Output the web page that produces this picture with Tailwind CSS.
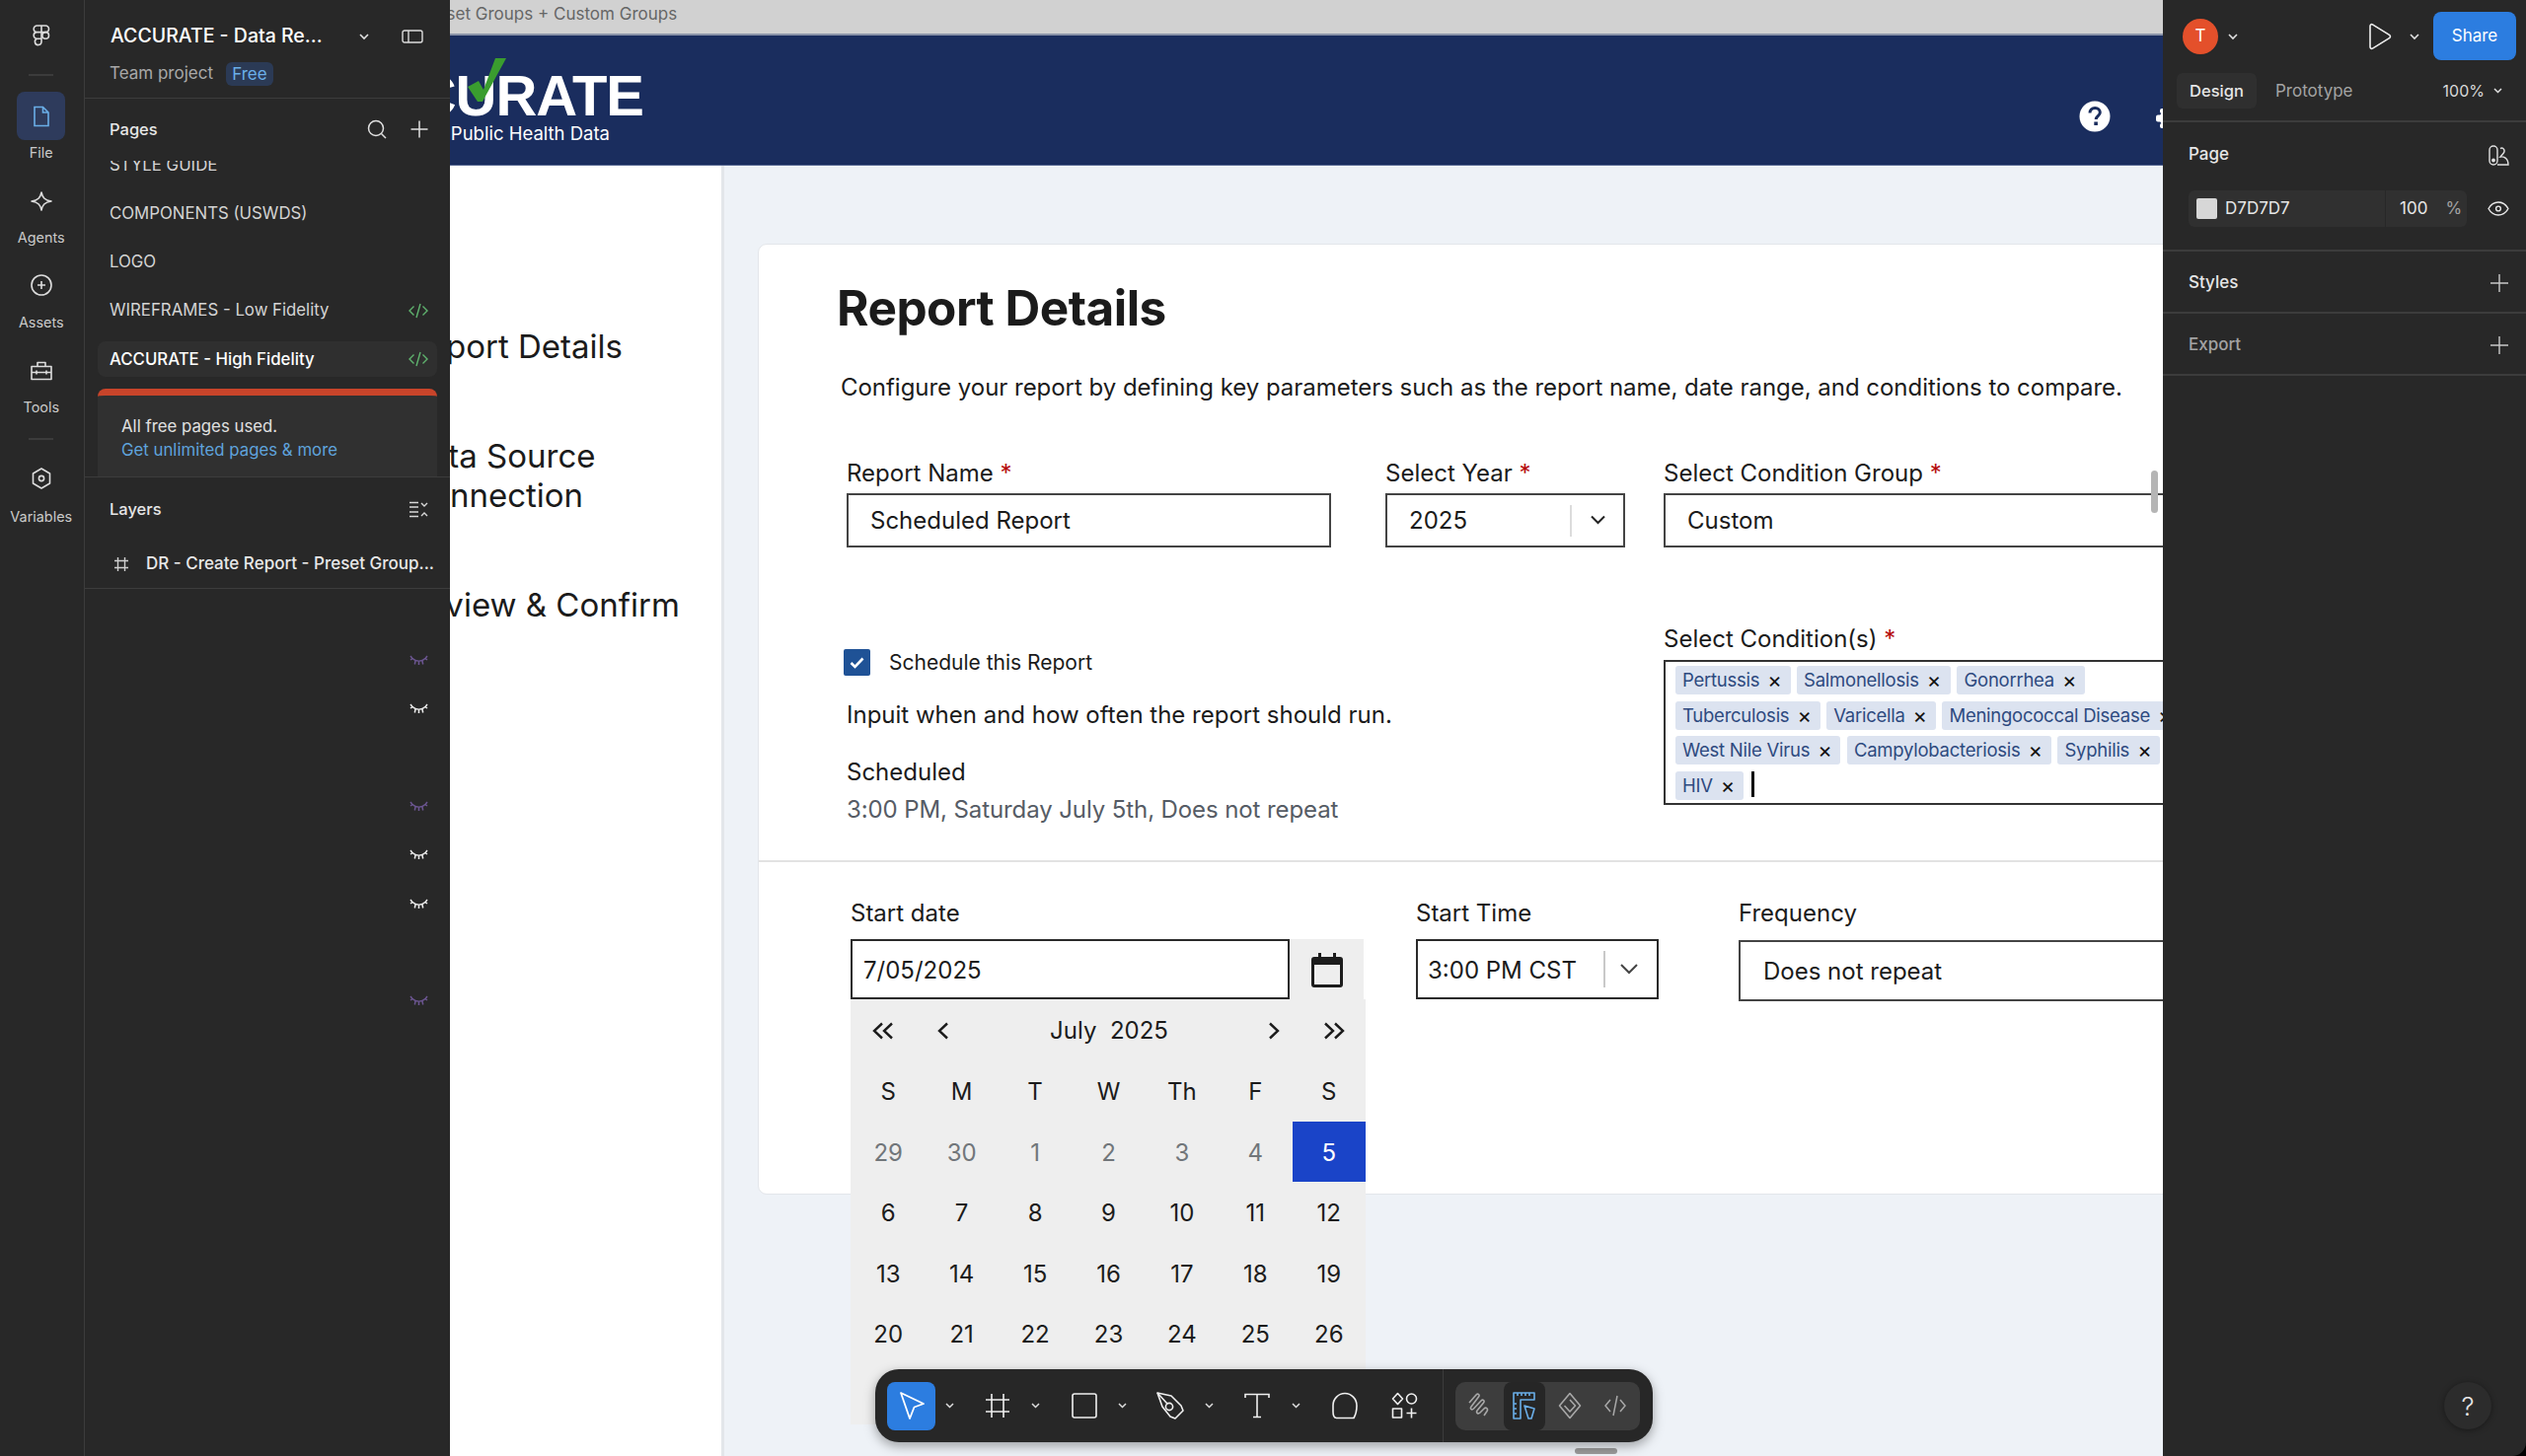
<!DOCTYPE html>
<html lang="en">
<head>
    <meta charset="UTF-8">
    <title>ACCURATE - Data Reports</title>
    <script src="https://cdn.jsdelivr.net/npm/@tailwindcss/browser@4"></script>
</head>
<body class="bg-black font-['Inter','Noto_Sans',sans-serif]">
<div class="flex w-[2560px] h-[1476px] overflow-hidden rounded-br-[14px]">

    <!-- left rail -->
    <nav class="w-[86px] shrink-0 bg-[#282828] border-r border-[#3c3c3c] pr-[1.500px] flex flex-col items-center text-[14.400px] text-[#c9c9c9]">
        <svg class="mt-[25px]" width="20" height="22" viewBox="0 0 20 22" fill="none" stroke="#dcdcdc" stroke-width="1.6"><path d="M10 1H5.500a3.300 3.300 0 0 0 0 6.600H10zM10 1h4.200a3.300 3.300 0 0 1 0 6.600H10zM10 7.600H5.500a3.300 3.300 0 0 0 0 6.600H10zM10 14.200H5.500A3.300 3.300 0 1 0 10 17.500z"/><circle cx="14.200" cy="10.900" r="3.300"/></svg>
        <div class="w-[25px] h-[2px] bg-[#3c3c3c] mt-[28px]"></div>
        <div class="w-[49px] h-[49px] rounded-[8px] bg-[#2e3b5c] mt-[16px] flex items-center justify-center">
            <svg width="18" height="22" viewBox="0 0 18 22" fill="none" stroke="#6aaee8" stroke-width="1.6"><path d="M2 1.500h8.500L16 7v13.500H2zM10.500 1.500V7H16"/></svg>
        </div>
        <span class="mt-[4px] leading-[18px]">File</span>
        <svg class="mt-[29px]" width="24" height="22" viewBox="0 0 24 22" fill="none" stroke="#dcdcdc" stroke-width="1.6"><path d="M12 2c1 5 3 8 10 9-7 1-9 4-10 9-1-5-3-8-10-9 7-1 9-4 10-9z" stroke-linejoin="round"/></svg>
        <span class="mt-[17px] leading-[18px]">Agents</span>
        <svg class="mt-[27px]" width="24" height="24" viewBox="0 0 24 24" fill="none" stroke="#dcdcdc" stroke-width="1.6"><circle cx="12" cy="12" r="10"/><path d="M12 8v8M8 12h8"/></svg>
        <span class="mt-[17px] leading-[18px]">Assets</span>
        <svg class="mt-[29px]" width="24" height="22" viewBox="0 0 24 22" fill="none" stroke="#dcdcdc" stroke-width="1.6"><path d="M8 6V2.500h8V6M2 6.500h20v13H2zM2 12.500h20M7 10.500v4M17 10.500v4" stroke-linejoin="round"/></svg>
        <span class="mt-[17px] leading-[18px]">Tools</span>
        <div class="w-[25px] h-[2px] bg-[#3c3c3c] mt-[22px]"></div>
        <svg class="mt-[27px]" width="22" height="24" viewBox="0 0 22 24" fill="none" stroke="#dcdcdc" stroke-width="1.6"><path d="M11 2l8.500 5v10L11 22l-8.500-5V7z" stroke-linejoin="round"/><circle cx="11" cy="12" r="2.600"/></svg>
        <span class="mt-[18px] leading-[18px]">Variables</span>
    </nav>

    <!-- pages and layers -->
    <aside class="w-[370px] shrink-0 bg-[#282828] flex flex-col text-[#d4d4d4]">
        <header class="h-[100px] shrink-0 border-b border-[#3c3c3c] pl-[26px] pt-[25px]">
            <div class="flex items-center h-[24px]">
                <span class="text-[19.500px] font-medium text-white whitespace-nowrap w-[251px]">ACCURATE - Data Re...</span>
                <svg class="ml-[1px]" width="10" height="7" viewBox="0 0 10 7" fill="none" stroke="#e0e0e0" stroke-width="1.6"><path d="M1 1l4 4 4-4"/></svg>
                <svg class="ml-[33px]" width="22" height="14" viewBox="0 0 22 14" fill="none" stroke="#dcdcdc" stroke-width="1.4"><rect x="1" y="1" width="20" height="12" rx="2"/><path d="M7 1v12"/></svg>
            </div>
            <div class="flex items-center mt-[13px] text-[17px]">
                <span class="text-[#a8a8a8] ml-[-1px]">Team project</span>
                <span class="ml-[13px] w-[48px] h-[24px] text-center leading-[24px] rounded-[6px] bg-[#2b3a55] text-[#6aaee8]">Free</span>
            </div>
        </header>
        <div class="h-[63px] shrink-0 flex items-center pl-[25px] pr-[21px] pb-[1px] text-[16.500px] font-medium text-[#e6e6e6] relative z-10 bg-[#282828]">
            <span class="flex-1">Pages</span>
            <svg width="20" height="20" viewBox="0 0 20 20" fill="none" stroke="#e0e0e0" stroke-width="1.5"><circle cx="9" cy="9" r="7.500"/><path d="M14.500 14.500L19 19"/></svg>
            <svg class="ml-[23px]" width="20" height="20" viewBox="0 0 20 20" fill="none" stroke="#e0e0e0" stroke-width="1.5"><path d="M10 1.500v17M1.500 10h17"/></svg>
        </div>
        <div class="h-[321px] shrink-0 overflow-hidden border-b border-[#3c3c3c] text-[16.800px]">
            <div class="mt-[-20.500px]">
                <div class="h-[49.300px] flex items-center pl-[25px]">STYLE GUIDE</div>
                <div class="h-[49.300px] flex items-center pl-[25px]">COMPONENTS (USWDS)</div>
                <div class="h-[49.300px] flex items-center pl-[25px]">LOGO</div>
                <div class="h-[49.300px] flex items-center pl-[25px] pr-[22px] justify-between">
                    <span>WIREFRAMES - Low Fidelity</span>
                    <svg width="20" height="16" viewBox="0 0 20 16" fill="none" stroke="#5fb36e" stroke-width="1.4"><path d="M5.500 3.500L1 8l4.500 4.500M14.500 3.500L19 8l-4.500 4.500M12 1L8 15"/></svg>
                </div>
                <div class="h-[49.300px] flex items-center mx-[13px] pl-[12px] pr-[9px] justify-between font-medium text-white relative">
                    <span class="absolute inset-x-0 top-[6.600px] h-[36px] rounded-[8px] bg-[#2f2f2f]"></span>
                    <span class="relative">ACCURATE - High Fidelity</span>
                    <svg class="relative" width="20" height="16" viewBox="0 0 20 16" fill="none" stroke="#5fb36e" stroke-width="1.4"><path d="M5.500 3.500L1 8l4.500 4.500M14.500 3.500L19 8l-4.500 4.500M12 1L8 15"/></svg>
                </div>
                <div class="mx-[13px] mt-[5.500px] rounded-t-[8px] border-t-[7px] border-[#c8442a] bg-[#303030] pl-[24px] pt-[19px] pb-[40px] text-[16.800px] leading-[24px]">
                    <p class="text-[#e0e0e0]">All free pages used.</p>
                    <p class="text-[#5fa3dc]">Get unlimited pages &amp; more</p>
                </div>
            </div>
        </div>
        <div class="h-[113px] shrink-0 border-b border-[#3c3c3c]">
            <div class="flex items-center justify-between h-[64px] pl-[25px] pr-[22px] text-[16.500px] font-medium text-[#e6e6e6]">
                <span>Layers</span>
                <svg width="20" height="17" viewBox="0 0 20 17" fill="none" stroke="#d8d8d8" stroke-width="1.4"><path d="M1 1.500h9M1 6h9M1 11h9M1 15.500h9M13 2l3 3 3-3M13 15l3-3 3 3"/></svg>
            </div>
            <div class="flex items-center h-[48px] pl-[29px] text-[17px] font-medium text-[#e8e8e8] whitespace-nowrap">
                <svg width="16" height="16" viewBox="0 0 16 16" fill="none" stroke="#cfcfcf" stroke-width="1.4"><path d="M4.500 1v14M11.500 1v14M1 4.500h14M1 11.500h14"/></svg>
                <span class="ml-[17px]">DR - Create Report - Preset Group...</span>
            </div>
        </div>
        <ul class="mt-[48px] pr-[22px] flex flex-col items-end">
            <li class="h-[49.300px] flex items-center text-[#6b5590]"><svg width="19" height="11" viewBox="0 0 19 11" fill="none" stroke="currentColor" stroke-width="1.500"><path d="M3 3.500c2 2 4 2.700 6.500 2.700S14 5.500 16 3.500M1 1l2 2.500L1 5M18 1l-2 2.500L18 5M6 6l-.7 3.500M13 6l.7 3.500M9.500 6.500V10"/></svg></li>
            <li class="h-[49.300px] flex items-center text-[#ececec]"><svg width="19" height="11" viewBox="0 0 19 11" fill="none" stroke="currentColor" stroke-width="1.500"><path d="M3 3.500c2 2 4 2.700 6.500 2.700S14 5.500 16 3.500M1 1l2 2.500L1 5M18 1l-2 2.500L18 5M6 6l-.7 3.500M13 6l.7 3.500M9.500 6.500V10"/></svg></li>
            <li class="h-[49.300px]"></li>
            <li class="h-[49.300px] flex items-center text-[#6b5590]"><svg width="19" height="11" viewBox="0 0 19 11" fill="none" stroke="currentColor" stroke-width="1.500"><path d="M3 3.500c2 2 4 2.700 6.500 2.700S14 5.500 16 3.500M1 1l2 2.500L1 5M18 1l-2 2.500L18 5M6 6l-.7 3.500M13 6l.7 3.500M9.500 6.500V10"/></svg></li>
            <li class="h-[49.300px] flex items-center text-[#ececec]"><svg width="19" height="11" viewBox="0 0 19 11" fill="none" stroke="currentColor" stroke-width="1.500"><path d="M3 3.500c2 2 4 2.700 6.500 2.700S14 5.500 16 3.500M1 1l2 2.500L1 5M18 1l-2 2.500L18 5M6 6l-.7 3.500M13 6l.7 3.500M9.500 6.500V10"/></svg></li>
            <li class="h-[49.300px] flex items-center text-[#ececec]"><svg width="19" height="11" viewBox="0 0 19 11" fill="none" stroke="currentColor" stroke-width="1.500"><path d="M3 3.500c2 2 4 2.700 6.500 2.700S14 5.500 16 3.500M1 1l2 2.500L1 5M18 1l-2 2.500L18 5M6 6l-.7 3.500M13 6l.7 3.500M9.500 6.500V10"/></svg></li>
            <li class="h-[49.300px]"></li>
            <li class="h-[49.300px] flex items-center text-[#6b5590]"><svg width="19" height="11" viewBox="0 0 19 11" fill="none" stroke="currentColor" stroke-width="1.500"><path d="M3 3.500c2 2 4 2.700 6.500 2.700S14 5.500 16 3.500M1 1l2 2.500L1 5M18 1l-2 2.500L18 5M6 6l-.7 3.500M13 6l.7 3.500M9.500 6.500V10"/></svg></li>
        </ul>
    </aside>

    <!-- canvas: the frame is scrolled 200px past the left edge -->
    <main class="w-[1736px] shrink-0 relative overflow-hidden bg-[#eef2f7]">
        <div class="w-[2100px] ml-[-200px] flex flex-col h-full text-[#1b1b1b] text-[24px]">
            <div class="h-[36px] shrink-0 bg-[#d1d1d1] border-b-2 border-[#8a93a8] text-[17px] leading-[28px] text-[#666] whitespace-nowrap">DR - Create Report - Preset Groups + Custom Groups</div>

            <div class="h-[132px] shrink-0 bg-[#1a2d5e] border-b border-[#5a6a94] flex items-start text-white">
                <div class="relative w-[396px] flex flex-col items-end">
                    <span class="mt-[31px] text-[58px] leading-[60px] font-bold tracking-[-1px] font-['Liberation_Sans',sans-serif]">ACCURATE</span>
                    <span class="pr-[34px] mt-[-4px] text-[18.500px] leading-[24px]">Public Health Data</span>
                    <svg class="absolute left-[216px] top-[22px]" width="44" height="46" viewBox="0 0 44 46"><path d="M2 30l11-6 5 9L30 1h11L17 45h-5z" fill="#3a9d2f"/></svg>
                </div>
                <svg class="ml-[1455px] mt-[66px]" width="32" height="32" viewBox="0 0 32 32"><circle cx="16" cy="16" r="15.500" fill="#fff"/><path d="M11 12.500c0-3 2.300-5 5.200-5 3 0 5.100 1.900 5.100 4.500 0 3.600-4.100 3.700-4.100 7" fill="none" stroke="#1a2d5e" stroke-width="3"/><rect x="15.300" y="21.500" width="3.600" height="3.500" fill="#1a2d5e"/></svg>
                <svg class="ml-[46px] mt-[74px]" width="24" height="20" viewBox="0 0 24 20"><circle cx="12" cy="10" r="8.500" fill="#fff"/><rect x="0" y="6.500" width="6" height="7" rx="2" fill="#fff"/><rect x="4" y="0" width="6" height="5" rx="2" fill="#fff"/><rect x="4" y="15" width="6" height="5" rx="2" fill="#fff"/></svg>
            </div>

            <div class="flex-1 flex min-h-0">
                <!-- step list -->
                <div class="w-[478px] shrink-0 bg-white border-r-[3px] border-[#e3e6ea] pl-[156px] text-[33px] leading-[40px] text-[#1b1b1b]">
                    <p class="mt-[163px] whitespace-nowrap">Report Details</p>
                    <p class="mt-[71px] whitespace-nowrap">Data Source<br>Connection</p>
                    <p class="mt-[71px] whitespace-nowrap">Review &amp; Confirm</p>
                </div>

                <!-- form card -->
                <section class="ml-[34px] mt-[79px] w-[1600px] h-[964px] bg-white border border-[#e3e6ea] rounded-l-[9px]">
                    <div class="h-[626px] border-b-2 border-[#e2e2e2] pl-[89px] pt-[34px]">
                        <h1 class="ml-[-10px] text-[49.500px] leading-[60px] font-bold tracking-[-0.5px] text-[#1b1b1b]">Report Details</h1>
                        <p class="mt-[34px] ml-[-6px] leading-[34px] tracking-[-0.03px] whitespace-nowrap">Configure your report by defining key parameters such as the report name, date range, and conditions to compare.</p>
                        <div class="mt-[54px] flex">
                            <div class="w-[491px]">
                                <label class="block leading-[32px]">Report Name <span class="text-[#b50909]">*</span></label>
                                <div class="mt-[4px] h-[55px] border-2 border-[#444] pl-[22px] leading-[52px]">Scheduled Report</div>
                            </div>
                            <div class="w-[243px] ml-[55px]">
                                <label class="block leading-[32px]">Select Year <span class="text-[#b50909]">*</span></label>
                                <div class="mt-[4px] h-[55px] border-2 border-[#444] pl-[22px] pt-[1px] flex items-center relative">
                                    <span>2025</span>
                                    <span class="absolute left-[185px] top-[10px] h-[32px] w-[2px] bg-[#dcdcdc]"></span>
                                    <svg class="absolute left-[206px] top-[20px]" width="15" height="10" viewBox="0 0 15 10" fill="none" stroke="#222" stroke-width="2"><path d="M1 1.500l6.500 6.500L14 1.500"/></svg>
                                </div>
                            </div>
                            <div class="w-[600px] ml-[39px]">
                                <label class="block leading-[32px]">Select Condition Group <span class="text-[#b50909]">*</span></label>
                                <div class="mt-[4px] h-[55px] border-2 border-[#444] pl-[22px] leading-[52px]">Custom</div>
                            </div>
                        </div>
                        <div class="mt-[77px] flex">
                            <div class="w-[828px] pt-[26px]">
                                <div class="flex items-center ml-[-3px]">
                                    <span class="w-[27px] h-[27px] rounded-[2px] bg-[#1f5296] flex items-center justify-center">
                                        <svg width="15" height="12" viewBox="0 0 15 12" fill="none" stroke="#fff" stroke-width="2.600"><path d="M1.500 6l4 4 8-8.500"/></svg>
                                    </span>
                                    <span class="ml-[19px] text-[21px] leading-[27px]">Schedule this Report</span>
                                </div>
                                <p class="mt-[23px] leading-[34px]">Inpuit when and how often the report should run.</p>
                                <p class="mt-[24px] leading-[34px]">Scheduled</p>
                                <p class="mt-[4px] leading-[34px] tracking-[-0.1px] text-[#565c65]">3:00 PM, Saturday July 5th, Does not repeat</p>
                            </div>
                            <div>
                                <label class="block leading-[30px] relative top-[1px]">Select Condition(s) <span class="text-[#b50909]">*</span></label>
                                <div class="mt-[7px] w-[566px] h-[147px] border-2 border-[#333] pl-[10px] pr-[14px] pt-[4px] flex flex-wrap content-start gap-x-[6.500px] gap-y-[6.500px] text-[18.500px] leading-[29px] tracking-[-0.25px] text-[#2e4a7f]">
                                    <span class="h-[29px] pl-[7px] pr-[9px] rounded-[3px] bg-[#dce3f0] flex items-center whitespace-nowrap">Pertussis<span class="ml-[8px] text-[#111] text-[22px]">×</span></span>
                                    <span class="h-[29px] pl-[7px] pr-[10px] rounded-[3px] bg-[#dce3f0] flex items-center whitespace-nowrap">Salmonellosis<span class="ml-[8px] text-[#111] text-[22px]">×</span></span>
                                    <span class="h-[29px] pl-[7px] pr-[9px] rounded-[3px] bg-[#dce3f0] flex items-center whitespace-nowrap">Gonorrhea<span class="ml-[8px] text-[#111] text-[22px]">×</span></span>
                                    <span class="h-[29px] pl-[7px] pr-[9px] rounded-[3px] bg-[#dce3f0] flex items-center whitespace-nowrap">Tuberculosis<span class="ml-[8px] text-[#111] text-[22px]">×</span></span>
                                    <span class="h-[29px] pl-[7px] pr-[9px] rounded-[3px] bg-[#dce3f0] flex items-center whitespace-nowrap">Varicella<span class="ml-[8px] text-[#111] text-[22px]">×</span></span>
                                    <span class="h-[29px] pl-[7px] pr-[9px] rounded-[3px] bg-[#dce3f0] flex items-center whitespace-nowrap">Meningococcal Disease<span class="ml-[8px] text-[#111] text-[22px]">×</span></span>
                                    <span class="h-[29px] pl-[7px] pr-[9px] rounded-[3px] bg-[#dce3f0] flex items-center whitespace-nowrap">West Nile Virus<span class="ml-[8px] text-[#111] text-[22px]">×</span></span>
                                    <span class="h-[29px] pl-[7px] pr-[9px] rounded-[3px] bg-[#dce3f0] flex items-center whitespace-nowrap">Campylobacteriosis<span class="ml-[8px] text-[#111] text-[22px]">×</span></span>
                                    <span class="h-[29px] pl-[7px] pr-[9px] rounded-[3px] bg-[#dce3f0] flex items-center whitespace-nowrap">Syphilis<span class="ml-[8px] text-[#111] text-[22px]">×</span></span>
                                    <span class="h-[29px] pl-[7px] pr-[9px] rounded-[3px] bg-[#dce3f0] flex items-center whitespace-nowrap">HIV<span class="ml-[8px] text-[#111] text-[22px]">×</span></span>
                                    <span class="w-[3px] h-[26px] bg-black ml-[1px]"></span>
                                </div>
                            </div>
                        </div>
                    </div>

                    <div class="pt-[36px] pl-[93px] flex">
                        <div class="w-[573px] relative">
                            <label class="block leading-[32px]">Start date</label>
                            <div class="mt-[10px] flex h-[61px]">
                                <div class="w-[445px] border-2 border-[#2a2a2a] pl-[11px] leading-[59px]">7/05/2025</div>
                                <div class="w-[75px] bg-[#eeeeee] flex items-center justify-center">
                                    <svg width="32" height="36" viewBox="0 0 32 36"><path d="M7 1h3v4h12V1h3v4h4a3 3 0 0 1 3 3v25a3 3 0 0 1-3 3H3a3 3 0 0 1-3-3V8a3 3 0 0 1 3-3h4zM3 13v20h26V13z" fill="#1c1c1c"/></svg>
                                </div>
                            </div>
                            <!-- date picker drops over the card -->
                            <div class="absolute left-0 top-[103px] z-10 w-[522px] h-[431px] bg-[#eeeeee] text-center">
                                <div class="h-[62px] pt-[2px] flex items-center text-[#1b1b1b]">
                                    <svg class="ml-[21px]" width="24" height="18" viewBox="0 0 24 18" fill="none" stroke="#1b1b1b" stroke-width="2.400"><path d="M11 1.500L3 9l8 7.500M21 1.500L13 9l8 7.500"/></svg>
                                    <svg class="ml-[43px]" width="12" height="18" viewBox="0 0 12 18" fill="none" stroke="#1b1b1b" stroke-width="2.400"><path d="M10 1.500L2 9l8 7.500"/></svg>
                                    <span class="ml-[92px] w-[140px] whitespace-pre text-[24px]">July  2025</span>
                                    <svg class="ml-[91px]" width="12" height="18" viewBox="0 0 12 18" fill="none" stroke="#1b1b1b" stroke-width="2.400"><path d="M2 1.500L10 9l-8 7.500"/></svg>
                                    <svg class="ml-[43px]" width="24" height="18" viewBox="0 0 24 18" fill="none" stroke="#1b1b1b" stroke-width="2.400"><path d="M3 1.500L11 9l-8 7.500M13 1.500L21 9l-8 7.500"/></svg>
                                </div>
                                <div class="grid grid-cols-7 auto-rows-[61.500px] items-stretch pl-[1px]">
                                    <span class="leading-[63px]">S</span><span class="leading-[63px]">M</span><span class="leading-[63px]">T</span><span class="leading-[63px]">W</span><span class="leading-[63px]">Th</span><span class="leading-[63px]">F</span><span class="leading-[63px]">S</span>
                                    <span class="leading-[63px] text-[#71767a]">29</span><span class="leading-[63px] text-[#71767a]">30</span><span class="leading-[63px] text-[#71767a]">1</span><span class="leading-[63px] text-[#71767a]">2</span><span class="leading-[63px] text-[#71767a]">3</span><span class="leading-[63px] text-[#71767a]">4</span><span class="leading-[63px] bg-[#1a44c8] text-white">5</span>
                                    <span class="leading-[63px]">6</span><span class="leading-[63px]">7</span><span class="leading-[63px]">8</span><span class="leading-[63px]">9</span><span class="leading-[63px]">10</span><span class="leading-[63px]">11</span><span class="leading-[63px]">12</span>
                                    <span class="leading-[63px]">13</span><span class="leading-[63px]">14</span><span class="leading-[63px]">15</span><span class="leading-[63px]">16</span><span class="leading-[63px]">17</span><span class="leading-[63px]">18</span><span class="leading-[63px]">19</span>
                                    <span class="leading-[63px]">20</span><span class="leading-[63px]">21</span><span class="leading-[63px]">22</span><span class="leading-[63px]">23</span><span class="leading-[63px]">24</span><span class="leading-[63px]">25</span><span class="leading-[63px]">26</span>
                                </div>
                            </div>
                        </div>
                        <div class="w-[246px]">
                            <label class="block leading-[32px]">Start Time</label>
                            <div class="mt-[10px] h-[61px] border-2 border-[#2a2a2a] pl-[10px] relative leading-[59px]">
                                3:00 PM CST
                                <span class="absolute left-[188px] top-[10px] h-[37px] w-[2px] bg-[#c9c9c9]"></span>
                                <svg class="absolute left-[205px] top-[23px]" width="18" height="11" viewBox="0 0 18 11" fill="none" stroke="#444" stroke-width="2"><path d="M1 1l8 8 8-8"/></svg>
                            </div>
                        </div>
                        <div class="w-[600px] ml-[81px]">
                            <label class="block leading-[32px]">Frequency</label>
                            <div class="mt-[11px] h-[62px] border-2 border-[#444] pl-[23px] leading-[60px]">Does not repeat</div>
                        </div>
                    </div>
                </section>
            </div>
        </div>

        <!-- canvas scrollbar -->
        <div class="absolute left-[1724px] top-[477px] w-[7px] h-[43px] rounded-full bg-[#b5b5b5]"></div>

        <!-- floating toolbar -->
        <div class="absolute left-[431px] top-[1388px] z-20 w-[788px] h-[74px] rounded-[24px] bg-[#272727] shadow-[0_4px_12px_rgba(0,0,0,0.35)] flex items-center text-white">
            <span class="ml-[12px] w-[49px] h-[49px] rounded-[8px] bg-[#2c7de0] flex items-center justify-center">
                <svg width="28" height="30" viewBox="0 0 28 30" fill="none" stroke="#fff" stroke-width="1.800"><path d="M3 2l23 11-9.500 3.500L12 28z" stroke-linejoin="round"/></svg>
            </span>
            <svg class="ml-[9.500px]" width="9" height="6" viewBox="0 0 9 6" fill="none" stroke="#ddd" stroke-width="1.500"><path d="M1 1l3.500 3.500L8 1"/></svg>
            <svg class="ml-[31.500px]" width="26" height="26" viewBox="0 0 26 26" fill="none" stroke="#f0f0f0" stroke-width="1.600"><path d="M7 1v24M19 1v24M1 7h24M1 19h24"/></svg>
            <svg class="ml-[20.500px]" width="9" height="6" viewBox="0 0 9 6" fill="none" stroke="#ddd" stroke-width="1.500"><path d="M1 1l3.500 3.500L8 1"/></svg>
            <svg class="ml-[32.500px]" width="26" height="26" viewBox="0 0 26 26" fill="none" stroke="#f0f0f0" stroke-width="1.600"><rect x="1" y="1" width="24" height="24" rx="2"/></svg>
            <svg class="ml-[20.500px]" width="9" height="6" viewBox="0 0 9 6" fill="none" stroke="#ddd" stroke-width="1.500"><path d="M1 1l3.500 3.500L8 1"/></svg>
            <svg class="ml-[29.500px]" width="30" height="30" viewBox="0 0 30 30" fill="none" stroke="#f0f0f0" stroke-width="1.600"><path d="M2 2l14 3 10 10 2 5-8 8-5-2-8-10z" stroke-linejoin="round"/><circle cx="14" cy="16" r="3.600"/><path d="M2 2l10 11"/></svg>
            <svg class="ml-[19.500px]" width="9" height="6" viewBox="0 0 9 6" fill="none" stroke="#ddd" stroke-width="1.500"><path d="M1 1l3.500 3.500L8 1"/></svg>
            <svg class="ml-[31.500px]" width="26" height="26" viewBox="0 0 26 26" fill="none" stroke="#f0f0f0" stroke-width="1.600"><path d="M1 5V1.500h24V5M13 1.500v23M9 24.500h8"/></svg>
            <svg class="ml-[21.500px]" width="9" height="6" viewBox="0 0 9 6" fill="none" stroke="#ddd" stroke-width="1.500"><path d="M1 1l3.500 3.500L8 1"/></svg>
            <svg class="ml-[32.500px]" width="26" height="28" viewBox="0 0 26 28" fill="none" stroke="#f0f0f0" stroke-width="1.600"><path d="M13 1.500c6.500 0 12 5.500 12 12.500 0 5-1 9-3 12.500H4.500C2 26.500 1 24 1 20V13.500C1 7 6.500 1.500 13 1.500z"/></svg>
            <svg class="ml-[33.500px]" width="27" height="28" viewBox="0 0 27 28" fill="none" stroke="#f0f0f0" stroke-width="1.600"><path d="M6.500 1.500L11.500 7l-5 5.500L1.500 7zM1.500 17h9v9h-9z" stroke-linejoin="round"/><circle cx="20.500" cy="7" r="5"/><path d="M20.500 16.500v10M15.500 21.500h10"/></svg>
            <div class="ml-[25.500px] w-[1px] h-[74px] bg-[#3c3c3c]"></div>
            <div class="ml-[12px] w-[187px] h-[49px] rounded-[10px] bg-[#3d3d3d] flex items-center">
                <svg class="ml-[12px]" width="24" height="26" viewBox="0 0 24 26" fill="none" stroke="#a8a8a8" stroke-width="1.600"><path d="M2 10l7-8c2-2 4 0 2.500 2L4 14c-1.500 2 .5 4 2.500 2L14 8c2-2 4 0 2.500 2L10 18c-1.500 2 1 4 3 2l4-4c2-2 4.500 0 3 2.500l-3 4.500"/></svg>
                <span class="ml-[13px] w-[42px] h-[49px] rounded-[8px] bg-[#262626] flex items-center justify-center">
                    <svg width="24" height="28" viewBox="0 0 24 28" fill="none" stroke="#6aaee8" stroke-width="1.600"><path d="M1 1h21v7H8v19H1zM5 1v3M9 1v3M13 1v3M17 1v3M1 12h3M1 17h3M1 22h3M12 14l10 3-3 10h-3z" stroke-linejoin="round"/></svg>
                </span>
                <svg class="ml-[13px]" width="24" height="28" viewBox="0 0 24 28" fill="none" stroke="#a8a8a8" stroke-width="1.600"><path d="M12 1.500L22.500 14 12 26.500 1.500 14zM12 8l5.500 6L12 20l-5.500-6" stroke-linejoin="round"/></svg>
                <svg class="ml-[23px]" width="22" height="22" viewBox="0 0 22 22" fill="none" stroke="#a8a8a8" stroke-width="1.500"><path d="M6 5l-5 6 5 6M16 5l5 6-5 6M13 1L9 21"/></svg>
            </div>
        </div>
        <div class="absolute left-[1140px] top-[1468px] w-[43px] h-[6px] rounded-full bg-[#9a9a9a]"></div>
    </main>

    <!-- right panel -->
    <aside class="w-[368px] shrink-0 bg-[#282828] relative flex flex-col text-[#e6e6e6] text-[17px]">
        <div class="h-[74px] shrink-0 flex items-start pt-[12px] pr-[9px]">
            <span class="ml-[20px] mt-[7px] w-[36px] h-[36px] rounded-full bg-[#e4502b] text-white text-[17px] flex items-center justify-center">T</span>
            <svg class="ml-[10px] mt-[22px]" width="10" height="7" viewBox="0 0 10 7" fill="none" stroke="#e0e0e0" stroke-width="1.600"><path d="M1 1l4 4 4-4"/></svg>
            <svg class="ml-[132px] mt-[11px]" width="24" height="28" viewBox="0 0 24 28" fill="none" stroke="#f0f0f0" stroke-width="1.600"><path d="M2 3.500c0-1.500 1.200-2.300 2.500-1.600L21.500 12.400c1.300.8 1.300 2.400 0 3.200L4.500 26.100C3.200 26.800 2 26 2 24.500z"/></svg>
            <svg class="ml-[18px] mt-[22px]" width="10" height="7" viewBox="0 0 10 7" fill="none" stroke="#e0e0e0" stroke-width="1.600"><path d="M1 1l4 4 4-4"/></svg>
            <span class="ml-[14px] w-[84px] h-[49px] rounded-[8px] bg-[#2c7de0] text-white text-[17px] flex items-center justify-center">Share</span>
        </div>
        <div class="h-[50px] shrink-0 border-b-2 border-[#3c3c3c] flex items-start pl-[14px] pr-[24px]">
            <span class="w-[81px] h-[36px] rounded-[6px] bg-[#2f2f2f] flex items-center justify-center font-medium text-[16.500px]">Design</span>
            <span class="ml-[19px] h-[36px] pt-[1px] flex items-center text-[#a3a3a3]">Prototype</span>
            <span class="ml-auto h-[36px] flex items-center text-[#d8d8d8] text-[16px]">100%
                <svg class="ml-[9px]" width="9" height="6" viewBox="0 0 9 6" fill="none" stroke="#e0e0e0" stroke-width="1.500"><path d="M1 1l3.500 3.500L8 1"/></svg>
            </span>
        </div>
        <div class="h-[131px] shrink-0 border-b-2 border-[#3c3c3c] pl-[26px] pr-[17px]">
            <div class="h-[64px] pt-[2px] flex items-center justify-between font-medium">
                <span>Page</span>
                <svg width="21" height="21" viewBox="0 0 21 21" fill="none" stroke="#e0e0e0" stroke-width="1.400"><rect x="1" y="1" width="8" height="19" rx="4"/><circle cx="5" cy="15.500" r="1.200" fill="#e0e0e0"/><path d="M12 3.500c3-1.500 5.500 2 3 5L12 12c3-.5 8 1 8 8H9"/></svg>
            </div>
            <div class="flex items-center mt-[5px]">
                <div class="w-[283px] h-[37px] rounded-[6px] bg-[#303030] flex items-center text-[#e6e6e6]">
                    <span class="ml-[8px] w-[21px] h-[21px] rounded-[2px] bg-[#d7d7d7]"></span>
                    <span class="ml-[8px] w-[162px]">D7D7D7</span>
                    <span class="w-[1px] h-[37px] bg-[#282828]"></span>
                    <span class="ml-[14px]">100</span>
                    <span class="ml-[18px] text-[#a3a3a3]">%</span>
                </div>
                <svg class="ml-[21px]" width="22" height="15" viewBox="0 0 22 15" fill="none" stroke="#e8e8e8" stroke-width="1.400"><path d="M1 7.500C3.500 3 7 1 11 1s7.500 2 10 6.500C18.500 12 15 14 11 14s-7.500-2-10-6.500z"/><circle cx="11" cy="7.500" r="2.400"/></svg>
            </div>
        </div>
        <div class="h-[63px] shrink-0 border-b-2 border-[#3c3c3c] pl-[26px] pr-[17px] pt-[2px] flex items-center justify-between font-medium">
            <span>Styles</span>
            <svg width="20" height="20" viewBox="0 0 20 20" fill="none" stroke="#c8c8c8" stroke-width="1.400"><path d="M10 1v18M1 10h18"/></svg>
        </div>
        <div class="h-[63px] shrink-0 border-b-2 border-[#3c3c3c] pl-[26px] pr-[17px] pt-[2px] flex items-center justify-between font-medium text-[#a3a3a3]">
            <span>Export</span>
            <svg width="20" height="20" viewBox="0 0 20 20" fill="none" stroke="#c8c8c8" stroke-width="1.400"><path d="M10 1v18M1 10h18"/></svg>
        </div>
        <span class="absolute left-[285px] top-[1401px] w-[48px] h-[48px] rounded-full bg-[#2c2c2c] shadow-[0_1px_6px_rgba(0,0,0,0.4)] text-[#e6e6e6] text-[26px] font-light flex items-center justify-center">?</span>
    </aside>
</div>
</body>
</html>
